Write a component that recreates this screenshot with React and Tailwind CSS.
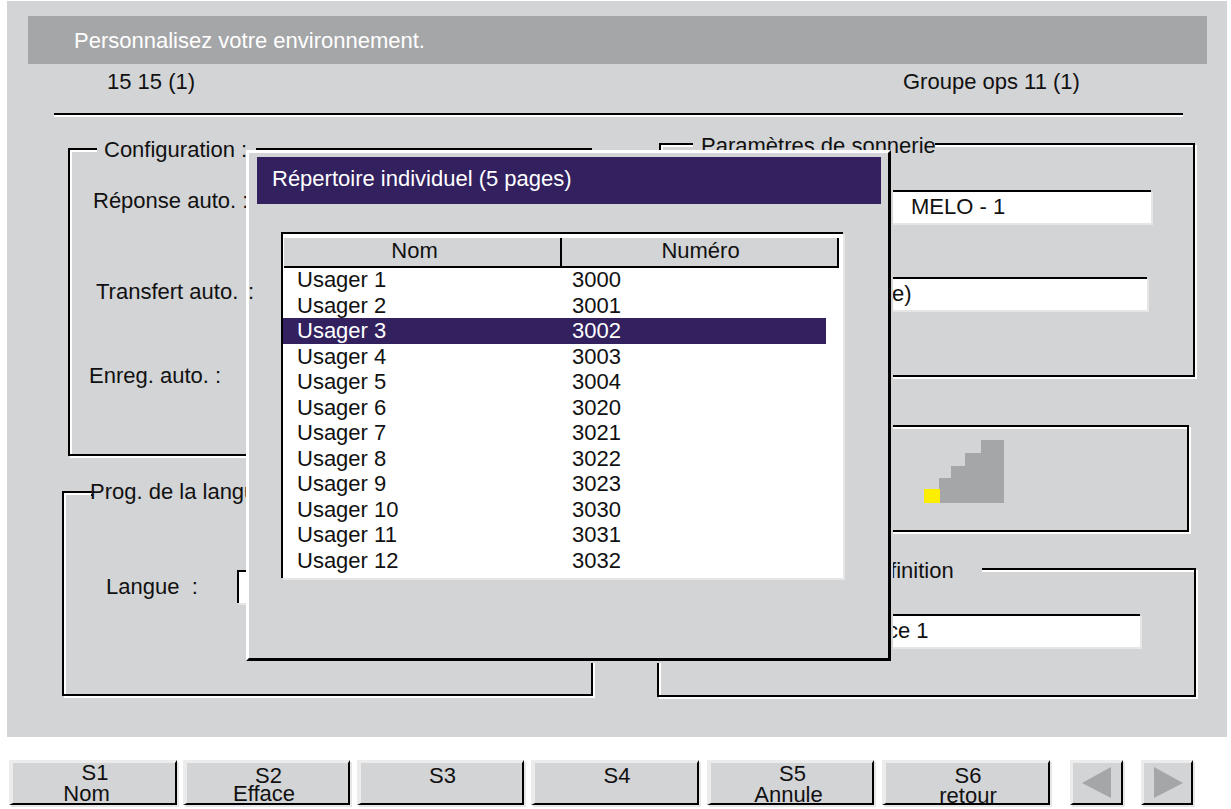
const users = [
  ["Usager 1", "3000"],
  ["Usager 2", "3001"],
  ["Usager 3", "3002"],
  ["Usager 4", "3003"],
  ["Usager 5", "3004"],
  ["Usager 6", "3020"],
  ["Usager 7", "3021"],
  ["Usager 8", "3022"],
  ["Usager 9", "3023"],
  ["Usager 10", "3030"],
  ["Usager 11", "3031"],
  ["Usager 12", "3032"],
];

function GroupBox({ className, children }) {
  return (
    <div
      className={`relative border-2 border-black shadow-[inset_2px_2px_0_#fff,2px_2px_0_#fff] ${className}`}
    >
      {children}
    </div>
  );
}

function Field({ className, children }) {
  return (
    <div
      className={`h-[33px] leading-[29px] bg-white border-t-2 border-black shadow-[2px_2px_0_#e6e6e6] whitespace-pre ${className}`}
    >
      {children}
    </div>
  );
}

function SoftKey({ className, top, bottom, topClass, bottomClass }) {
  return (
    <div
      className={`h-[45px] bg-[#d3d4d6] border-t-[3px] border-l-4 border-t-[#ececec] border-l-[#ececec] border-r-2 border-b-2 border-r-black border-b-black shadow-[2px_2px_0_#e6e6e6] text-center leading-[21px] ${className}`}
    >
      <div className={topClass}>{top}</div>
      {bottom && <div className={bottomClass}>{bottom}</div>}
    </div>
  );
}

function Arrow({ className, points }) {
  return (
    <div
      className={`h-[45px] flex items-center justify-center bg-[#d3d4d6] border-t-[3px] border-l-[3px] border-t-[#ececec] border-l-[#ececec] border-r-2 border-b-2 border-r-black border-b-black shadow-[2px_2px_0_#e6e6e6] ${className}`}
    >
      <svg width="30" height="32" viewBox="0 0 30 32">
        <polygon points={points} fill="#a5a6a8" />
      </svg>
    </div>
  );
}

function Directory() {
  return (
    <div className="absolute left-[239px] top-[149px] w-[645px] h-[511px] bg-[#d3d4d6] border-l-[3px] border-t-[3px] border-l-white border-t-white border-r-[3px] border-b-[3px] border-r-black border-b-black shadow-[2px_2px_0_#d3d4d6]">
      <div className="ml-[8px] mt-[4px] w-[624px] h-[47px] px-[15px] leading-[44px] bg-[#32205f] text-white">
        Répertoire individuel (5 pages)
      </div>
      <div className="ml-[32px] mt-[28px] w-[562px] h-[346px] bg-white border-t-2 border-l-2 border-t-black border-l-black shadow-[2px_2px_0_#e6e6e6]">
        <div className="flex ml-px pt-[4px]">
          <div className="w-[278px] h-[30px] pr-[15px] leading-[26px] text-center bg-[#d3d4d6] border-r-2 border-b-2 border-black">
            Nom
          </div>
          <div className="w-[277px] h-[30px] pl-[2px] leading-[26px] text-center bg-[#d3d4d6] border-r-2 border-b-2 border-black">
            Numéro
          </div>
        </div>
        <div className="-mt-px">
          {users.map(([name, number], index) => (
            <div
              key={name}
              className={`flex w-[543px] h-[25.5px] leading-[25.5px] ${
                index === 2 ? "bg-[#32205f] text-white" : ""
              }`}
            >
              <span className="w-[289px] pl-[14px]">{name}</span>
              <span>{number}</span>
            </div>
          ))}
        </div>
      </div>
    </div>
  );
}

export default function App() {
  return (
    <div className="w-[1231px] h-[809px] overflow-hidden bg-white text-[22px] text-[#111] font-['Liberation_Sans',Arial,sans-serif]">
      <div className="relative ml-[7px] mt-px w-[1220px] h-[736px] bg-[#d3d4d6]">
        <div className="pt-[15px]">
          <div className="ml-[21px] w-[1179px] h-[48px] pl-[46px] leading-[50px] bg-[#a5a6a8] text-white">
            Personnalisez votre environnement.
          </div>
        </div>
        <div className="flex h-[38px] leading-[36px]">
          <span className="ml-[100px] w-[796px]">15 15 (1)</span>
          <span>Groupe ops 11 (1)</span>
        </div>
        <div className="ml-[47px] mt-[11px] w-[1129px] h-[2px] bg-black shadow-[0_2px_0_#fff]" />

        <div className="flex mt-[28px]">
          <div className="ml-[55px] w-[532px] pt-[5px]">
            <GroupBox className="ml-[6px] w-[524px] h-[308px]">
              <span className="absolute left-[27px] -top-[2px] w-[159px] h-[4px] bg-[#d3d4d6]" />
              <span className="absolute left-[34px] -top-[13px] leading-[25px]">Configuration :</span>
              <div className="ml-[23px] mt-[36px] leading-[30px]">Réponse auto. :</div>
              <div className="flex ml-[26px] mt-[61px] leading-[30px]">
                <span className="w-[152px]">Transfert auto.</span>
                <span className="relative z-10">:</span>
              </div>
              <div className="ml-[19px] mt-[54px] leading-[30px]">Enreg. auto. :</div>
            </GroupBox>
            <GroupBox className="mt-[35px] w-[531px] h-[205px]">
              <span className="absolute left-[28px] -top-[2px] w-[220px] h-[4px] bg-[#d3d4d6]" />
              <span className="absolute left-[27px] top-px w-[2px] h-[2px] bg-black" />
              <span className="absolute left-[26px] -top-[14px] leading-[25px]">Prog. de la langue</span>
              <div className="flex items-center mt-[77px] ml-[42px]">
                <span className="w-[131px] whitespace-pre">Langue  :</span>
                <Field className="w-[200px] border-l-2" />
              </div>
            </GroupBox>
          </div>

          <div className="ml-[63px] w-[540px]">
            <GroupBox className="ml-[2px] w-[536px] h-[234px]">
              <span className="absolute left-[32px] -top-[2px] w-[242px] h-[4px] bg-[#d3d4d6]" />
              <span className="absolute left-[40px] -top-[12px] leading-[25px]">Paramètres de sonnerie</span>
              <Field className="ml-[190px] mt-[45px] w-[300px] pl-[60px]">MELO - 1</Field>
              <Field className="ml-[190px] mt-[54px] w-[296px] pl-[41px]">e)</Field>
            </GroupBox>
            <GroupBox className="ml-[2px] mt-[48px] w-[530px] h-[107px]">
              <svg className="ml-[263px] mt-[13px]" width="80" height="63" viewBox="0 0 80 63">
                <polygon
                  points="15,63 15,38 27,38 27,26 41,26 41,13 57,13 57,0 80,0 80,63"
                  fill="#a5a6a8"
                />
                <rect x="0" y="49" width="16" height="14" fill="#fdee00" />
              </svg>
            </GroupBox>
            <GroupBox className="mt-[36px] w-[539px] h-[129px]">
              <span className="absolute left-[30px] -top-[2px] w-[293px] h-[4px] bg-[#d3d4d6]" />
              <span className="absolute left-[203px] -top-[12px] leading-[25px]">Définition</span>
              <Field className="ml-[192px] mt-[44px] w-[289px] pl-[36px]">ce 1</Field>
            </GroupBox>
          </div>
        </div>

        <Directory />
      </div>

      <div className="flex mt-[23px]">
        <SoftKey className="ml-[9px] w-[168px]" top="S1" bottom="Nom" topClass="-mt-px ml-[2px]" bottomClass="mr-[15px]" />
        <SoftKey className="ml-[6px] w-[167px]" top="S2" bottom="Efface" topClass="mt-[2px] ml-[2px]" bottomClass="-mt-[3px] mr-[7px]" />
        <SoftKey className="ml-[7px] w-[167px]" top="S3" topClass="mt-[2px] ml-[2px]" />
        <SoftKey className="ml-[7px] w-[168px]" top="S4" topClass="mt-[2px] ml-[2px]" />
        <SoftKey className="ml-[8px] w-[167px]" top="S5" bottom="Annule" topClass="ml-[2px]" bottomClass="mr-[6px]" />
        <SoftKey className="ml-[8px] w-[168px]" top="S6" bottom="retour" topClass="mt-[2px] ml-[2px]" bottomClass="-mt-px ml-[2px]" />
        <Arrow className="ml-[20px] w-[53px]" points="0,16 29,0 29,31" />
        <Arrow className="ml-[18px] w-[52px]" points="1,0 30,16 1,31" />
      </div>
    </div>
  );
}
